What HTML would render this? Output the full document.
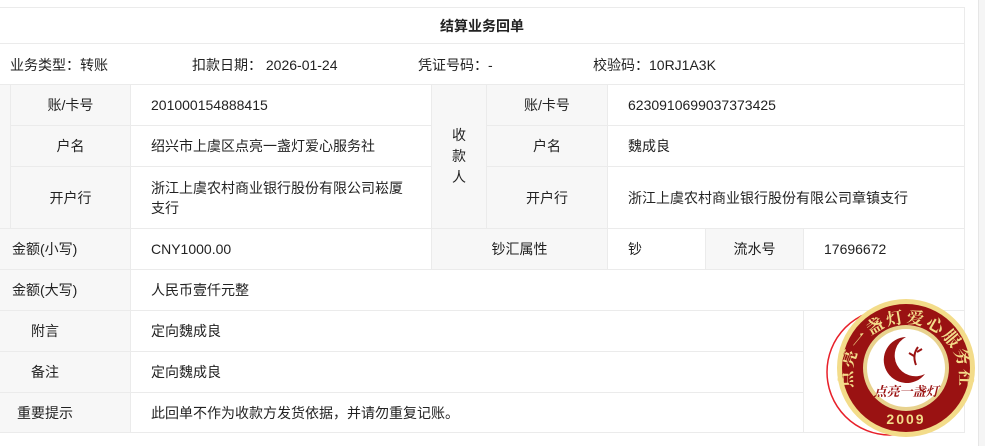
<!DOCTYPE html>
<html><head><meta charset="utf-8"><style>
*{margin:0;padding:0;box-sizing:border-box}
body{width:985px;height:446px;background:#fff;position:relative;overflow:hidden;font-family:"Liberation Sans","Noto Sans CJK SC",sans-serif;font-size:14px;color:#222}
.c{position:absolute;border:1px solid #ebebeb;display:flex;align-items:center}
.g{background:#f7f7f7}
.ctr{justify-content:center;text-align:center}
.l{padding-left:20px}
.t{position:absolute;white-space:nowrap}
</style></head><body>
<div style="position:absolute;left:978px;top:0;width:7px;height:446px;background:#f5f5f5;border-left:1px solid #e6e6e6"></div>
<div class="c ctr" style="left:-1px;top:7px;width:966px;height:37px;font-weight:bold">结算业务回单</div>
<div class="c" style="left:-1px;top:43px;width:966px;height:42px"></div>
<div class="t" style="left:10px;top:55px">业务类型：转账</div>
<div class="t" style="left:192px;top:55px">扣款日期：&nbsp;2026-01-24</div>
<div class="t" style="left:418px;top:55px">凭证号码：-</div>
<div class="t" style="left:593px;top:55px">校验码：10RJ1A3K</div>

<div class="c g" style="left:-1px;top:84px;width:12px;height:145px"></div>
<div class="c g ctr" style="left:10px;top:84px;width:121px;height:42px">账/卡号</div>
<div class="c l" style="left:130px;top:84px;width:302px;height:42px">201000154888415</div>
<div class="c g ctr" style="left:10px;top:125px;width:121px;height:42px">户名</div>
<div class="c l" style="left:130px;top:125px;width:302px;height:42px">绍兴市上虞区点亮一盏灯爱心服务社</div>
<div class="c g ctr" style="left:10px;top:166px;width:121px;height:63px">开户行</div>
<div class="c l" style="left:130px;top:166px;width:302px;height:63px;line-height:20px;padding-right:20px">浙江上虞农村商业银行股份有限公司崧厦支行</div>
<div class="c g ctr" style="left:431px;top:84px;width:56px;height:145px;line-height:21px">收<br>款<br>人</div>
<div class="c g ctr" style="left:486px;top:84px;width:122px;height:42px">账/卡号</div>
<div class="c l" style="left:607px;top:84px;width:358px;height:42px">6230910699037373425</div>
<div class="c g ctr" style="left:486px;top:125px;width:122px;height:42px">户名</div>
<div class="c l" style="left:607px;top:125px;width:358px;height:42px">魏成良</div>
<div class="c g ctr" style="left:486px;top:166px;width:122px;height:63px">开户行</div>
<div class="c l" style="left:607px;top:166px;width:358px;height:63px">浙江上虞农村商业银行股份有限公司章镇支行</div>

<div class="c g" style="left:-1px;top:228px;width:132px;height:42px;padding-left:12px">金额(小写)</div>
<div class="c l" style="left:130px;top:228px;width:302px;height:42px">CNY1000.00</div>
<div class="c g ctr" style="left:431px;top:228px;width:177px;height:42px">钞汇属性</div>
<div class="c l" style="left:607px;top:228px;width:99px;height:42px">钞</div>
<div class="c g ctr" style="left:705px;top:228px;width:99px;height:42px">流水号</div>
<div class="c l" style="left:803px;top:228px;width:162px;height:42px">17696672</div>

<div class="c g" style="left:-1px;top:269px;width:132px;height:42px;padding-left:12px">金额(大写)</div>
<div class="c l" style="left:130px;top:269px;width:835px;height:42px">人民币壹仟元整</div>
<div class="c g" style="left:-1px;top:310px;width:132px;height:42px;padding-left:31px">附言</div>
<div class="c l" style="left:130px;top:310px;width:674px;height:42px">定向魏成良</div>
<div class="c g" style="left:-1px;top:351px;width:132px;height:42px;padding-left:31px">备注</div>
<div class="c l" style="left:130px;top:351px;width:674px;height:42px">定向魏成良</div>
<div class="c g" style="left:-1px;top:392px;width:132px;height:41px;padding-left:17px">重要提示</div>
<div class="c l" style="left:130px;top:392px;width:674px;height:41px">此回单不作为收款方发货依据，并请勿重复记账。</div>
<div class="c" style="left:803px;top:310px;width:162px;height:123px"></div>

<svg style="position:absolute;left:820px;top:290px" width="165" height="156" viewBox="0 0 165 156">
<defs><path id="arc" d="M38 112 A54 54 0 1 1 134 112"/></defs>
<circle cx="70" cy="82" r="63" fill="#fff" stroke="#e8202a" stroke-width="1.5"/>
<circle cx="86" cy="78" r="69" fill="#f3dc8a"/>
<circle cx="86" cy="78" r="64" fill="#9a1212"/>
<circle cx="86" cy="78" r="43" fill="#e8d28e"/>
<circle cx="86" cy="78" r="39" fill="#fff"/>
<path d="M86 47 a23 23 0 1 0 19 37 a19 19 0 0 1 -19 -37z" fill="#9a1212"/>
<path d="M96 75 q-4 -10 2 -18 M94 66 l-5 -3 M97 62 l5 -3" stroke="#9a1212" stroke-width="2" fill="none"/>
<text x="86" y="106" text-anchor="middle" font-family="Noto Serif CJK SC,serif" font-size="13" font-weight="bold" fill="#9a1212" font-style="italic">点亮一盏灯</text>
<text x="86" y="134" text-anchor="middle" font-family="Liberation Sans,sans-serif" font-size="14" font-weight="bold" fill="#f3dc8a" letter-spacing="2">2009</text>
<text font-family="Noto Serif CJK SC,serif" font-size="17" fill="#f3dc8a" font-weight="bold" letter-spacing="2"><textPath href="#arc" startOffset="50%" text-anchor="middle">点亮一盏灯爱心服务社</textPath></text>
</svg>
</body></html>
